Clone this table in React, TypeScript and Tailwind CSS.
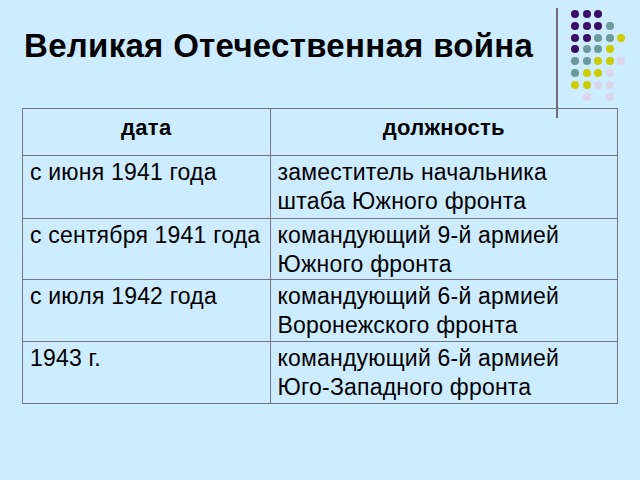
const P = "#3a0c66";
const T = "#6a9a9a";
const Y = "#cccc00";
const L = "#dcd6ec";

// dot pattern, rows top→bottom, five columns each ("" = empty)
const dots: string[][] = [
  [P, P, P, "", ""],
  [P, P, P, T, ""],
  [P, P, T, T, Y],
  [P, T, T, Y, ""],
  [T, T, Y, Y, L],
  [T, Y, Y, L, ""],
  [Y, Y, L, L, ""],
  ["", L, "", L, ""],
];

const rows = [
  { date: "с июня 1941 года", post: ["заместитель начальника", "штаба Южного фронта"], h: "h-[63px]" },
  { date: "с сентября 1941 года", post: ["командующий 9-й армией", "Южного фронта"], h: "h-[61px]" },
  { date: "с июля 1942 года", post: ["командующий 6-й армией", "Воронежского фронта"], h: "h-[62px]" },
  { date: "1943 г.", post: ["командующий 6-й армией", "Юго-Западного фронта"], h: "h-[62px]" },
];

function Decor() {
  return (
    <div className="absolute left-0 top-0 h-[120px] w-[640px] pointer-events-none">
      <div className="absolute left-[556px] top-[8px] h-[110px] w-[2px] bg-[#6b7079]" />
      <div className="absolute left-[571px] top-[10px] grid grid-cols-5 gap-x-[3.6px] gap-y-[3.8px]">
        {dots.flat().map((c, i) => (
          <div
            key={i}
            className="h-[8px] w-[8px] rounded-full"
            style={{ backgroundColor: c || "transparent" }}
          />
        ))}
      </div>
    </div>
  );
}

export default function App() {
  return (
    <div className="relative h-[480px] w-[640px] overflow-hidden bg-[#cdecff] font-['Liberation_Sans',Arial,sans-serif] text-black">
      <Decor />
      <h1 className="pl-[24px] pt-[27px] text-[33px] font-bold leading-[38px] tracking-[0.3px]">Великая Отечественная война</h1>
      <table className="ml-[22px] mt-[43px] w-[596px] border-collapse border-[1.5px] border-[#4d5258]">
        <colgroup>
          <col className="w-[248px]" />
          <col className="w-[348px]" />
        </colgroup>
        <thead>
          <tr className="h-[47px]">
            <th className="border border-[#6f7780] pt-[6px] align-top text-[22px] font-bold leading-[26px] tracking-[0.3px]">дата</th>
            <th className="border border-[#6f7780] pt-[6px] align-top text-[22px] font-bold leading-[26px] tracking-[0.3px]">должность</th>
          </tr>
        </thead>
        <tbody>
          {rows.map((r) => (
            <tr key={r.date} className={r.h}>
              <td className="border border-[#6f7780] px-[7px] pt-[2px] align-top text-[23px] leading-[29px] tracking-[0.2px]">{r.date}</td>
              <td className="border border-[#6f7780] px-[7px] pt-[2px] align-top text-[23px] leading-[29px] tracking-[0.2px]">
                {r.post.map((l) => (
                  <div key={l}>{l}</div>
                ))}
              </td>
            </tr>
          ))}
        </tbody>
      </table>
    </div>
  );
}
